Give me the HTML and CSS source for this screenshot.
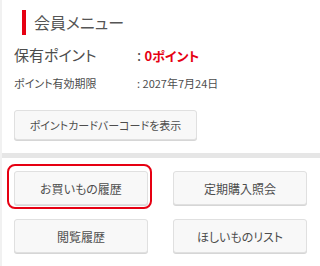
FILE: index.html
```html
<!DOCTYPE html>
<html lang="ja">
<head>
<meta charset="utf-8">
<link rel="stylesheet" href="styles.css">
</head>
<body>
<div class="page">
  <section class="member">
    <h2 class="member-title">会員メニュー</h2>
    <dl class="info">
      <dt class="info-label info-label--big">保有ポイント</dt>
      <dd class="info-value info-value--big">: <span class="points">0ポイント</span></dd>
      <dt class="info-label info-label--small">ポイント有効期限</dt>
      <dd class="info-value info-value--small">: 2027年7月24日</dd>
    </dl>
    <button class="btn btn--barcode" type="button">ポイントカードバーコードを表示</button>
  </section>
  <div class="divider"></div>
  <section class="menu">
    <div class="menu-item menu-item--active"><button class="btn btn--menu" type="button">お買いもの履歴</button></div>
    <div class="menu-item"><button class="btn btn--menu" type="button">定期購入照会</button></div>
    <div class="menu-item"><button class="btn btn--menu" type="button">閲覧履歴</button></div>
    <div class="menu-item"><button class="btn btn--menu" type="button">ほしいものリスト</button></div>
  </section>
</div>
</body>
</html>
```
FILE: styles.css
```css
* { box-sizing: border-box; }
html, body { margin: 0; padding: 0; }
body {
  background: #f1f1f1;
  font-family: "Noto Sans CJK JP", "Noto Sans", sans-serif;
  font-feature-settings: "palt";
  color: #4d4d4d;
  width: 320px;
  height: 266px;
  overflow: hidden;
}
.page {
  margin-left: 2px;
  background: #fff;
  height: 266px;
}
.member {
  padding: 10px 0 13px 12px;
}
.member-title {
  margin: 0 0 0 8px;
  border-left: 4px solid #e60012;
  padding-left: 8px;
  height: 25px;
  line-height: 25px;
  font-size: 16px;
  font-weight: normal;
  color: #555;
}
.info {
  display: grid;
  grid-template-columns: 123px auto;
  margin: 9px 0 0 0;
}
.info-label, .info-value { margin: 0; }
.info-label--big, .info-value--big {
  font-size: 15px;
  line-height: 22px;
}
.info-label--small, .info-value--small {
  font-size: 11px;
  line-height: 17px;
  margin-top: 8px;
}
.points {
  color: #e60012;
  font-weight: bold;
  font-size: 13px;
}
.btn {
  font-family: inherit;
  font-feature-settings: "palt";
  background: #f8f8f8;
  border: 1px solid #e0e0e0;
  border-radius: 3px;
  box-shadow: 0 1px 0 #d6d6d6;
  color: #4d4d4d;
  cursor: pointer;
  padding: 0;
}
.btn--barcode {
  margin-top: 18px;
  height: 30px;
  width: 183px;
  font-size: 11px;
}
.divider {
  height: 5px;
  background: #e6e6e6;
}
.menu {
  display: grid;
  grid-template-columns: 134px 134px;
  column-gap: 25px;
  row-gap: 14px;
  padding: 13px 0 0 12px;
}
.menu-item { position: relative; }
.btn--menu {
  width: 134px;
  height: 34px;
  font-size: 12px;
  display: block;
}
.menu-item--active::after {
  content: "";
  position: absolute;
  left: -7px;
  top: -7px;
  right: -4px;
  bottom: -4px;
  border: 2px solid #e60012;
  border-radius: 8px;
  pointer-events: none;
}
```
